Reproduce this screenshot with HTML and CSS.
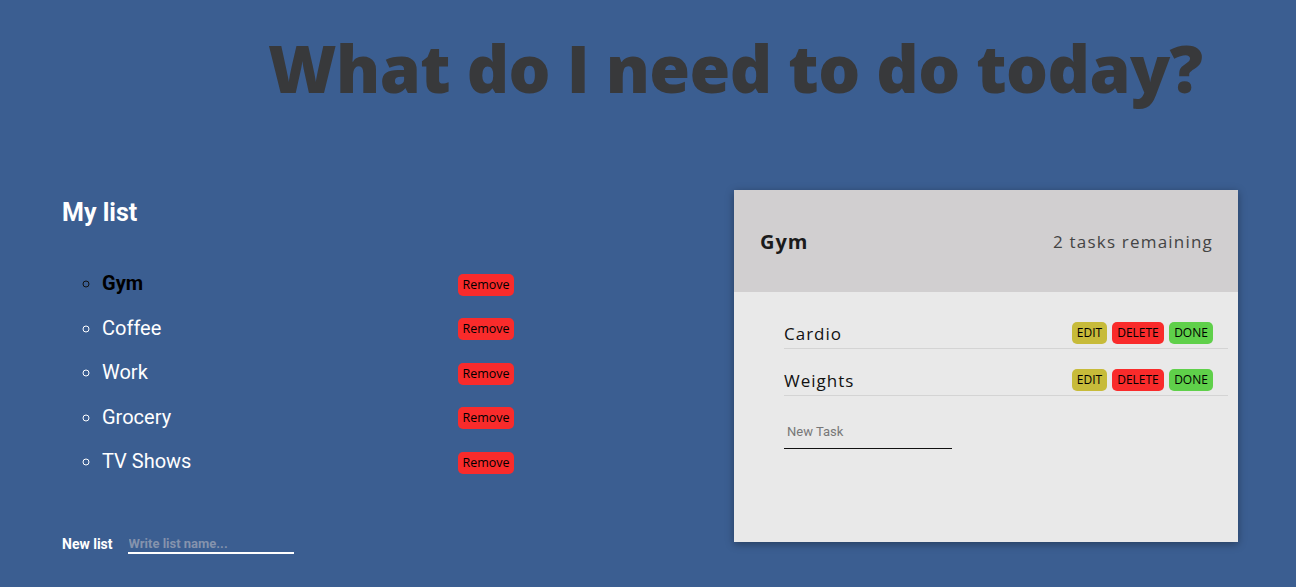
FILE: index.html
```html
<!DOCTYPE html>
<html>
<head>
<meta charset="utf-8">
<link rel="stylesheet" href="styles.css">
</head>
<body>
<header class="top">
  <h1 class="title">What do I need to do today?</h1>
</header>
<main class="main">
  <section class="lists">
    <h2 class="lists-title">My list</h2>
    <ul class="list">
      <li class="list-item active"><span class="name">Gym</span><button class="btn remove">Remove</button></li>
      <li class="list-item"><span class="name">Coffee</span><button class="btn remove">Remove</button></li>
      <li class="list-item"><span class="name">Work</span><button class="btn remove">Remove</button></li>
      <li class="list-item"><span class="name">Grocery</span><button class="btn remove">Remove</button></li>
      <li class="list-item"><span class="name">TV Shows</span><button class="btn remove">Remove</button></li>
    </ul>
    <form class="new-list">
      <label class="new-list-label">New list</label>
      <input class="new-list-input" type="text" placeholder="Write list name...">
    </form>
  </section>
  <section class="card">
    <div class="card-head">
      <h2 class="card-title">Gym</h2>
      <span class="card-count">2 tasks remaining</span>
    </div>
    <div class="card-body">
      <div class="task"><span class="task-name">Cardio</span>
        <div class="task-actions"><button class="btn edit">EDIT</button><button class="btn delete">DELETE</button><button class="btn done">DONE</button></div>
      </div>
      <div class="task"><span class="task-name">Weights</span>
        <div class="task-actions"><button class="btn edit">EDIT</button><button class="btn delete">DELETE</button><button class="btn done">DONE</button></div>
      </div>
      <input class="new-task" type="text" placeholder="New Task">
    </div>
  </section>
</main>
</body>
</html>
```
FILE: styles.css
```css
html, body {
  margin: 0;
  padding: 0;
}
body {
  background: #3b5e91;
  width: 1296px;
  height: 587px;
  overflow: hidden;
  font-family: "Open Sans", sans-serif;
}
.top {
  padding: 22px 0 0 268px;
  height: 172px;
  box-sizing: border-box;
}
.title {
  margin: 0;
  font-family: "Open Sans", sans-serif;
  font-weight: 800;
  font-size: 66px;
  line-height: 90px;
  letter-spacing: -0.55px;
  color: #38393b;
  white-space: nowrap;
}
.main {
  display: flex;
  padding: 18px 58px 0 62px;
}
.lists {
  width: 452px;
  display: flex;
  flex-direction: column;
}
.lists-title {
  margin: 0;
  font-family: Roboto, sans-serif;
  font-weight: 700;
  font-size: 25px;
  line-height: 30px;
  color: #fff;
  height: 71px;
  padding-top: 8px;
  box-sizing: border-box;
}
.list {
  margin: 0;
  padding: 0 0 0 40px;
  list-style: circle;
  color: #fff;
}
.list-item {
  font-family: Roboto, sans-serif;
  font-size: 20px;
  height: 44.5px;
  line-height: 44.5px;
}
.list-item .name {
  display: inline-block;
  width: 356px;
  color: #fff;
}
.list-item.active .name {
  font-weight: 700;
  color: #000;
}
.list-item.active::marker {
  color: #111;
}
.btn {
  border: none;
  border-radius: 5px;
  font-family: "Open Sans", sans-serif;
  font-size: 12px;
  color: #000;
  padding: 0;
  height: 22px;
  line-height: 22px;
  vertical-align: middle;
}
.remove {
  width: 56px;
  font-size: 12.5px;
  background: #f92b2b;
}
.new-list {
  display: flex;
  align-items: center;
  gap: 15px;
  margin-top: 50px;
}
.new-list-label {
  font-family: Roboto, sans-serif;
  font-weight: 700;
  font-size: 14px;
  color: #fff;
}
.new-list-input {
  width: 166px;
  box-sizing: border-box;
  border: none;
  border-bottom: 2px solid #fff;
  background: transparent;
  font-family: Roboto, sans-serif;
  font-weight: 700;
  font-size: 13px;
  padding: 2px 1px 1px;
  color: #fff;
  outline: none;
}
.new-list-input::placeholder {
  color: #8593ad;
}
.card {
  margin-left: auto;
  width: 504px;
  height: 352px;
  background: #e9e9e9;
  box-shadow: 0 2px 8px rgba(0, 0, 0, 0.35);
  display: flex;
  flex-direction: column;
}
.card-head {
  height: 102px;
  background: #d1cfd0;
  display: flex;
  align-items: center;
  justify-content: space-between;
  padding: 0 25px 0 26px;
}
.card-title {
  margin: 0;
  font-family: "Open Sans", sans-serif;
  font-weight: 700;
  font-size: 20px;
  letter-spacing: 1px;
  color: #1b1b1b;
}
.card-count {
  font-family: "Open Sans", sans-serif;
  font-size: 17px;
  letter-spacing: 1.2px;
  color: #444;
}
.card-body {
  padding: 28px 10px 0 50px;
  display: flex;
  flex-direction: column;
}
.task {
  display: flex;
  align-items: center;
  justify-content: space-between;
  height: 28px;
  border-bottom: 1px solid #d4d4d4;
  padding-right: 15px;
  margin-bottom: 18px;
}
.task-name {
  font-family: "Open Sans", sans-serif;
  font-size: 17px;
  letter-spacing: 1px;
  color: #111;
  margin-top: -2px;
}
.task-actions {
  display: flex;
  gap: 5px;
  margin-top: -2px;
}
.edit { background: #c7bb3a; width: 35px; }
.delete { background: #f92b2b; width: 52px; }
.done { background: #5fd04a; width: 44px; }
.new-task {
  width: 168px;
  box-sizing: border-box;
  border: none;
  border-bottom: 1px solid #111;
  background: transparent;
  font-family: Roboto, sans-serif;
  font-size: 13px;
  padding: 4px 3px 9px;
  margin-top: 6px;
  outline: none;
}
.new-task::placeholder {
  color: #777;
}
```
